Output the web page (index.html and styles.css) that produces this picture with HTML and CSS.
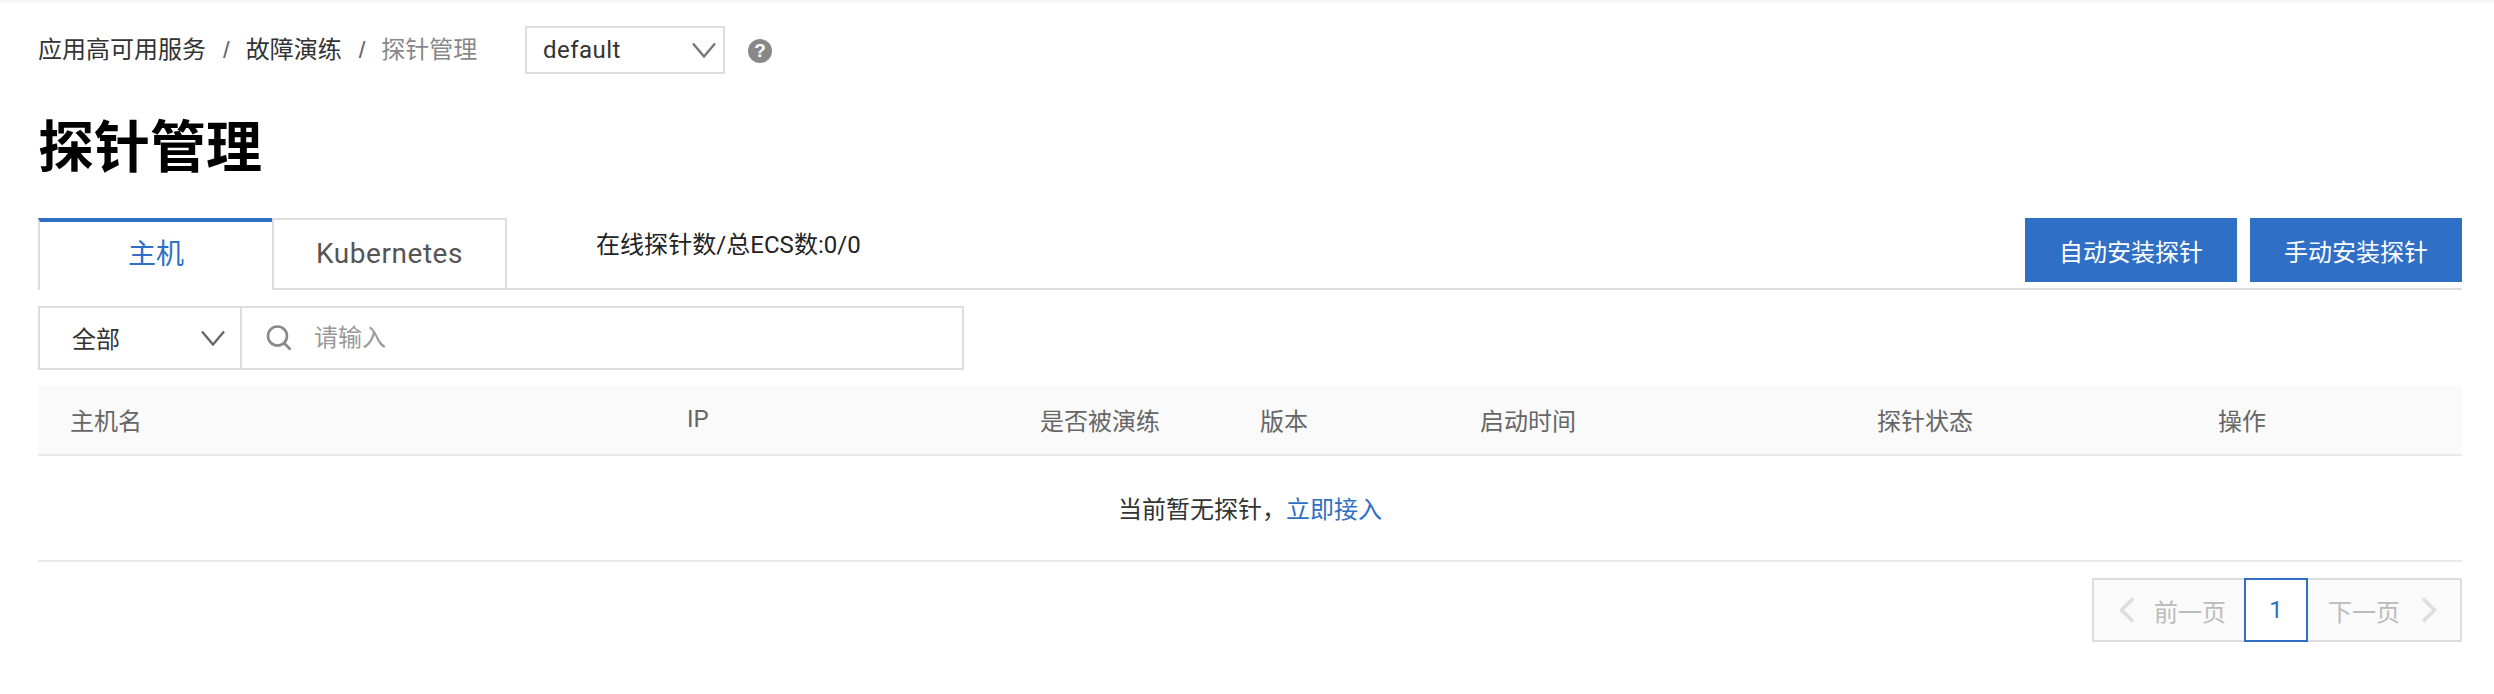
FILE: index.html
```html
<!DOCTYPE html>
<html lang="zh-CN">
<head>
<meta charset="utf-8">
<title>探针管理</title>
<link rel="stylesheet" href="styles.css">
</head>
<body>
<div class="topshade"></div>
<main class="page">
  <div class="crumbrow">
    <nav class="crumbs">
      <span>应用高可用服务</span><i class="sep">/</i><span>故障演练</span><i class="sep">/</i><span class="current">探针管理</span>
    </nav>
    <div class="select ns-select">
      <span class="nsname">default</span>
      <svg class="chev" width="24" height="16" viewBox="0 0 24 16"><path d="M1 1.5 12 14.5 23 1.5" fill="none" stroke="#777" stroke-width="2.4"/></svg>
    </div>
    <span class="help">?</span>
  </div>
  <h1 class="title">探针管理</h1>
  <div class="tabbar">
    <div class="tab active">主机</div>
    <div class="tab">Kubernetes</div>
    <div class="stat">在线探针数/总ECS数:0/0</div>
    <div class="actions">
      <button class="btn">自动安装探针</button>
      <button class="btn">手动安装探针</button>
    </div>
  </div>
  <div class="search">
    <div class="scope">
      <span class="scopename">全部</span>
      <svg class="chev" width="24" height="16" viewBox="0 0 24 16"><path d="M1 1.5 12 14.5 23 1.5" fill="none" stroke="#666" stroke-width="2.4"/></svg>
    </div>
    <svg class="mag" width="26" height="26" viewBox="0 0 26 26"><circle cx="11.5" cy="11" r="9.5" fill="none" stroke="#888" stroke-width="2.6"/><path d="M18 18 24.5 24.5" stroke="#888" stroke-width="2.6"/></svg>
    <input class="query" placeholder="请输入">
  </div>
  <table class="grid">
    <colgroup>
      <col class="c1"><col class="c2"><col class="c3"><col class="c4"><col class="c5"><col class="c6"><col>
    </colgroup>
    <thead>
      <tr><th>主机名</th><th>IP</th><th>是否被演练</th><th>版本</th><th>启动时间</th><th>探针状态</th><th>操作</th></tr>
    </thead>
    <tbody>
      <tr><td colspan="7" class="empty">当前暂无探针，<a class="link">立即接入</a></td></tr>
    </tbody>
  </table>
  <div class="pagerrow">
    <div class="pager">
      <div class="pg prev">
        <svg width="16" height="26" viewBox="0 0 16 26"><path d="M14 1.5 2.5 13 14 24.5" fill="none" stroke="#ddd" stroke-width="3.6"/></svg>
        <span>前一页</span>
      </div>
      <div class="pg num">1</div>
      <div class="pg next">
        <span>下一页</span>
        <svg width="16" height="26" viewBox="0 0 16 26"><path d="M2 1.5 13.5 13 2 24.5" fill="none" stroke="#ddd" stroke-width="3.6"/></svg>
      </div>
    </div>
  </div>
</main>
</body>
</html>
```
FILE: styles.css
```css
* { box-sizing: border-box; }
html, body { margin: 0; padding: 0; background: #fff; }
body {
  font-family: Roboto, "Noto Sans CJK SC", sans-serif;
  font-size: 24px;
  color: #333;
  height: 694px;
  overflow: hidden;
}
.topshade { height: 4px; background: linear-gradient(#f1f1f1, #fff); }
.page { padding: 22px 32px 0 38px; }

.crumbrow { display: flex; align-items: center; height: 48px; }
.crumbs { display: flex; align-items: center; width: 487px; line-height: 36px; color: #333; }
.sep { font-style: normal; color: #666; margin: 0 16px; font-family: "Liberation Sans", sans-serif; }
.sep + span + .sep { margin-left: 17px; }
.crumbs > span:first-child { margin-right: 1px; }
.current { color: #888; }
.select {
  display: flex; align-items: center; justify-content: space-between;
  width: 200px; height: 48px;
  border: 2px solid #ddd;
  padding: 0 7px 0 16px;
  color: #333;
}
.nsname { letter-spacing: 0.45px; }
.help {
  width: 24px; height: 24px; margin-left: 23px; margin-top: 2px;
  border-radius: 50%;
  background: #888; color: #fff;
  font: bold 19px/24px "Liberation Sans", sans-serif;
  text-align: center;
}

.title {
  margin: 35px 0 0 0;
  height: 109px;
  font-size: 56px;
  line-height: 78px;
  font-weight: 700;
  color: #000;
}

.tabbar {
  display: flex; align-items: flex-start;
  height: 72px;
  border-bottom: 2px solid #ddd;
}
.tab {
  width: 235px; height: 72px;
  border: 2px solid #ddd;
  font-size: 28px;
  line-height: 68px;
  text-align: center;
  color: #555;
  background: #fff;
  letter-spacing: 0.55px;
}
.tab.active {
  width: 234px;
  border-top: 4px solid #2f6fc6;
  border-left: 2px solid #ddd;
  border-right: 0;
  border-bottom: 0;
  color: #2f6fc6;
  line-height: 66px;
  height: 72px;
  letter-spacing: 0;
}
.stat { margin-left: 89px; line-height: 54px; color: #222; letter-spacing: 0.05px; }
.actions { margin-left: auto; display: flex; gap: 13px; }
.btn {
  width: 212px; height: 64px;
  border: 0;
  background: #2f6fc6;
  color: #fff;
  font: inherit;
  padding: 0;
}

.search {
  display: flex; align-items: center;
  width: 926px; height: 64px;
  margin-top: 16px;
  border: 2px solid #ddd;
}
.scope {
  display: flex; align-items: center; justify-content: space-between;
  width: 202px; height: 100%;
  border-right: 2px solid #ddd;
  padding: 0 15px 0 32px;
}
.scopename { margin-top: -2px; }
.mag { margin-left: 24px; }
.query {
  flex: 1; min-width: 0;
  margin-left: 22px;
  border: 0; outline: 0; padding: 0;
  font: inherit;
  background: transparent;
}
.query::placeholder { color: #999; opacity: 1; }

.grid {
  width: 100%;
  margin-top: 16px;
  border-collapse: separate;
  border-spacing: 0;
  table-layout: fixed;
}
.c1 { width: 617px; }
.c2 { width: 353px; }
.c3 { width: 220px; }
.c4 { width: 220px; }
.c5 { width: 397px; }
.c6 { width: 341px; }
.grid th {
  height: 70px;
  padding: 0 0 2px 32px;
  background: #fafafa;
  border-bottom: 2px solid #e9e9e9;
  text-align: left;
  font-weight: 400;
  color: #666;
}
.empty {
  height: 106px;
  text-align: center;
  border-bottom: 2px solid #e9e9e9;
  color: #333;
  padding: 0 0 2px;
}
.link { color: #2f6fc6; }

.pagerrow { display: flex; justify-content: flex-end; margin-top: 16px; }
.pager {
  display: flex;
  height: 64px;
  width: 370px;
  border: 2px solid #ddd;
  background: #fafafa;
  color: #bbb;
}
.pg { display: flex; align-items: center; }
.prev { width: 150px; padding-left: 25px; gap: 19px; }
.next { width: 152px; padding-left: 20px; gap: 21px; }
.num {
  width: 64px; height: 64px;
  margin-top: -2px;
  justify-content: center;
  border: 2px solid #2f6fc6;
  background: #fff;
  color: #2f6fc6;
}
```
